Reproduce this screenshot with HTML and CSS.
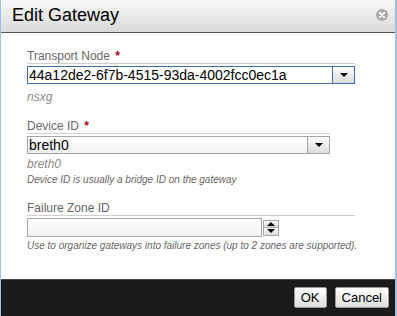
FILE: index.html
```html
<!DOCTYPE html>
<html lang="en">
<head>
    <meta charset="UTF-8">
    <title>Edit Gateway</title>
    <link rel="stylesheet" href="styles.css">
</head>
<body>
    <div class="dialog">
        <div class="titlebar">
            <h1>Edit Gateway</h1>
            <span class="close">
                <svg width="12" height="12" viewBox="0 0 12 12">
                    <circle cx="6" cy="6" r="6" fill="#a9a9a9"/>
                    <path d="M3.8 3.8 L8.2 8.2 M8.2 3.8 L3.8 8.2" stroke="#fff" stroke-width="1.8" stroke-linecap="round"/>
                </svg>
            </span>
        </div>

        <div class="content">
            <div class="field wide">
                <div class="label">Transport Node <span class="req">*</span></div>
                <div class="combo focused">
                    <span class="value">44a12de2-6f7b-4515-93da-4002fcc0ec1a</span>
                    <span class="arrow"></span>
                </div>
                <div class="hint">nsxg</div>
            </div>

            <div class="field narrow">
                <div class="label">Device ID <span class="req">*</span></div>
                <div class="combo">
                    <span class="value">breth0</span>
                    <span class="arrow"></span>
                </div>
                <div class="hint">breth0</div>
                <div class="help">Device ID is usually a bridge ID on the gateway</div>
            </div>

            <div class="field wide last">
                <div class="label">Failure Zone ID</div>
                <div class="number">
                    <span class="number-input"></span>
                    <span class="spinner">
                        <span class="spin up"></span>
                        <span class="spin down"></span>
                    </span>
                </div>
                <div class="help">Use to organize gateways into failure zones (up to 2 zones are supported).</div>
            </div>
        </div>

        <div class="footer">
            <button class="btn">OK</button>
            <button class="btn">Cancel</button>
        </div>
    </div>
</body>
</html>
```

FILE: styles.css
```css
* {
    margin: 0;
    padding: 0;
    box-sizing: border-box;
}

body {
    font-family: 'Liberation Sans', Arial, sans-serif;
    background: #fff;
    width: 397px;
    height: 316px;
    overflow: hidden;
}

.dialog {
    width: 397px;
    height: 316px;
    border-left: 1px solid #9dbfe0;
    border-right: 2px solid #9dbfe0;
    display: flex;
    flex-direction: column;
}

.titlebar {
    height: 33px;
    background: linear-gradient(#f7f7f7, #dadada);
    border-bottom: 1px solid #555;
    display: flex;
    align-items: center;
    justify-content: space-between;
    padding: 0 7px 2px 11px;
}

.titlebar h1 {
    font-size: 18px;
    font-weight: 400;
    color: #000;
}

.close {
    display: flex;
}

.content {
    flex: 1;
    padding: 16px 0 0 26px;
}

.field {
    display: flex;
    flex-direction: column;
    margin-bottom: 15px;
}

.wide {
    width: 328px;
}

.narrow {
    width: 303px;
}

.label {
    font-size: 12px;
    line-height: 14px;
    color: #666;
    border-bottom: 1px solid #cfcfcf;
}

.req {
    color: #a8002a;
    font-weight: 700;
    margin-left: 2px;
}

.combo {
    margin-top: 2px;
    height: 18px;
    border: 1px solid #a6a6a6;
    display: flex;
    background: linear-gradient(#fff, #f1f1f1);
}

.combo.focused {
    border-color: #3d6fae;
    background: #fff;
}

.combo .value {
    flex: 1;
    font-size: 14px;
    line-height: 16px;
    padding-left: 1px;
    color: #000;
}

.combo .arrow {
    width: 22px;
    border-left: 1px solid #a6a6a6;
    background: linear-gradient(#fbfbfb, #dcdcdc);
    display: flex;
    align-items: center;
    justify-content: center;
}

.combo.focused .arrow {
    border-left-color: #3d6fae;
}

.combo .arrow::after {
    content: '';
    border-left: 4px solid transparent;
    border-right: 4px solid transparent;
    border-top: 4px solid #000;
}

.hint {
    font-size: 12px;
    line-height: 14px;
    font-style: italic;
    color: #8a8a8a;
    margin-top: 6px;
}

.narrow .hint {
    margin-top: 3px;
}

.help {
    font-size: 10px;
    line-height: 12px;
    font-style: italic;
    color: #666;
    margin-top: 3px;
    white-space: nowrap;
}

.number {
    margin-top: 2px;
    display: flex;
    height: 19px;
}

.number-input {
    width: 235px;
    border: 1px solid #a6a6a6;
    background: linear-gradient(#fff, #f1f1f1);
}

.spinner {
    width: 16px;
    display: flex;
    flex-direction: column;
    justify-content: center;
    margin-left: 1px;
}

.spin {
    height: 8px;
    border: 1px solid #a6a6a6;
    background: linear-gradient(#fbfbfb, #dcdcdc);
    display: flex;
    align-items: center;
    justify-content: center;
}

.spin.down {
    border-top: none;
}

.spin.up::after {
    content: '';
    border-left: 4px solid transparent;
    border-right: 4px solid transparent;
    border-bottom: 4px solid #000;
}

.spin.down::after {
    content: '';
    border-left: 4px solid transparent;
    border-right: 4px solid transparent;
    border-top: 4px solid #000;
}

.footer {
    height: 37px;
    background: #1b1b1b;
    border-top: 1px solid #4a4a4a;
    display: flex;
    justify-content: flex-end;
    align-items: flex-start;
    gap: 8px;
    padding: 7px 6px 0 0;
}

.btn {
    font-family: 'Liberation Sans', Arial, sans-serif;
    font-size: 13px;
    height: 21px;
    padding: 0 6px;
    border: 1px solid #9a9a9a;
    border-radius: 2px;
    background: linear-gradient(#fff, #dedede);
    color: #000;
}
```
